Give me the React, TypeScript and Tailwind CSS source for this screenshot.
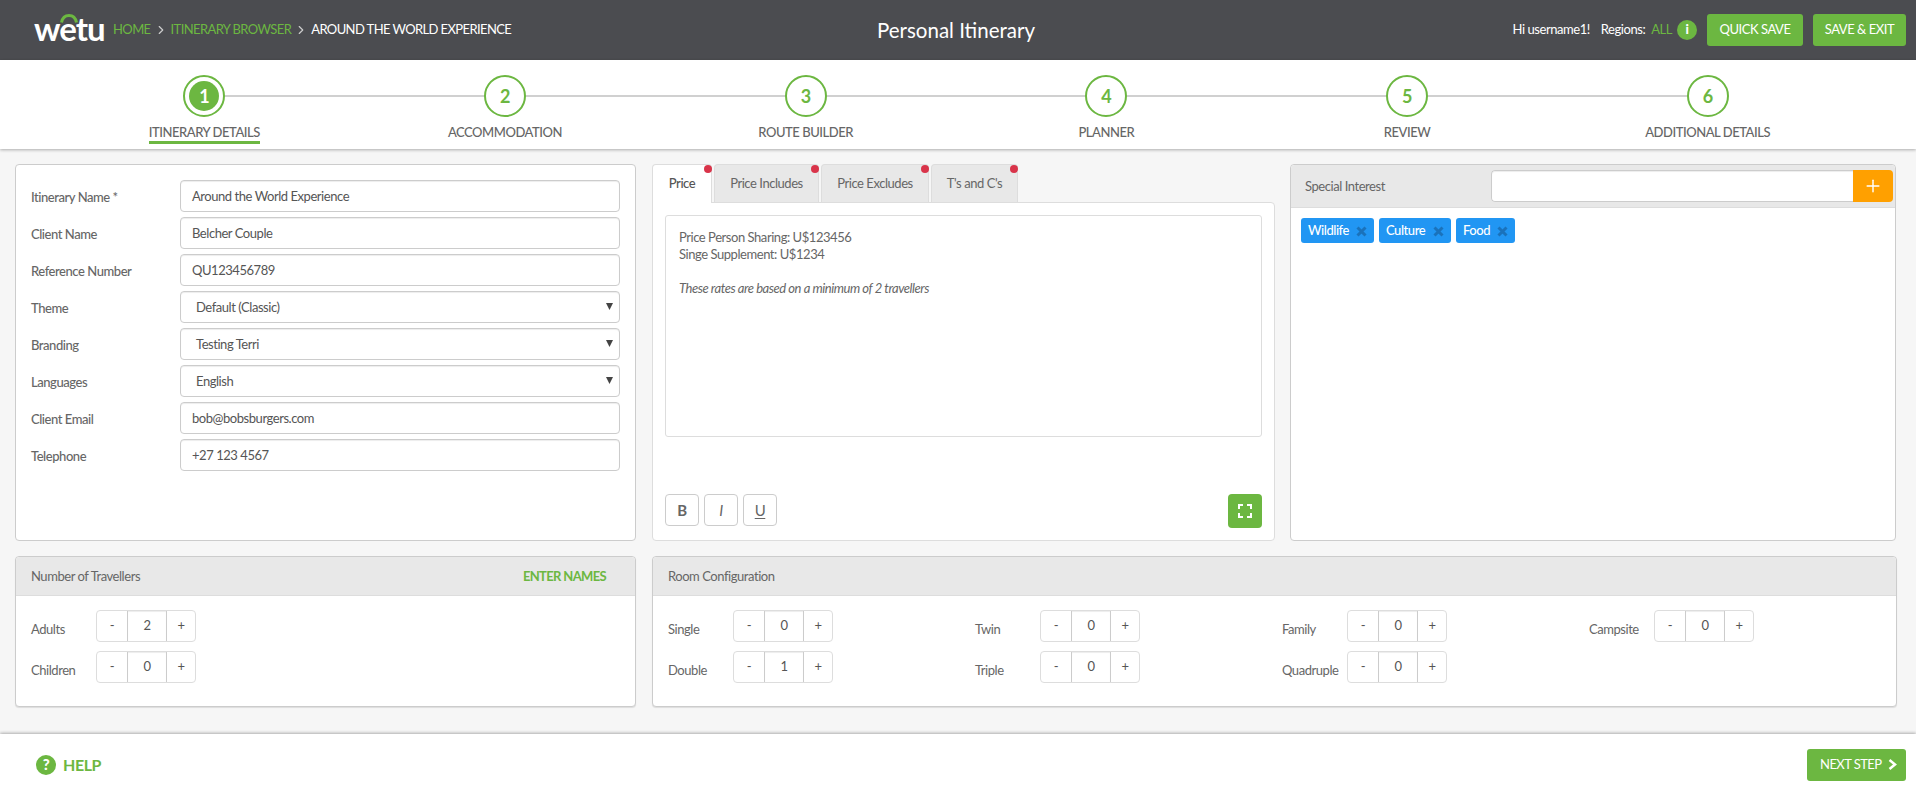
import React from "react";
import { ChevronRight, Plus } from "lucide-react";

const steps = ["ITINERARY DETAILS", "ACCOMMODATION", "ROUTE BUILDER", "PLANNER", "REVIEW", "ADDITIONAL DETAILS"];

const fields: { label: string; value: string; select?: boolean }[] = [
  { label: "Itinerary Name *", value: "Around the World Experience" },
  { label: "Client Name", value: "Belcher Couple" },
  { label: "Reference Number", value: "QU123456789" },
  { label: "Theme", value: "Default (Classic)", select: true },
  { label: "Branding", value: "Testing Terri", select: true },
  { label: "Languages", value: "English", select: true },
  { label: "Client Email", value: "bob@bobsburgers.com" },
  { label: "Telephone", value: "+27 123 4567" },
];

const tabs = [
  { name: "Price", w: "w-[60px]", active: true },
  { name: "Price Includes", w: "w-[105px]" },
  { name: "Price Excludes", w: "w-[108px]" },
  { name: "T's and C's", w: "w-[87px]" },
];

function Counter({ label, value, labelW }: { label: string; value: string; labelW: string }) {
  return (
    <div className="flex items-start">
      <div className={`${labelW} pt-[10px] text-[13px] leading-[18px] text-[#666]`}>{label}</div>
      <div className="flex h-[32px] w-[100px] rounded-[4px] border border-[#ddd] text-[13px] text-[#555]">
        <div className="flex w-[30px] items-center justify-center">-</div>
        <div className="flex w-[40px] items-center justify-center border-x border-[#ccc] shadow-[inset_0_1px_1px_rgba(0,0,0,0.075)]">{value}</div>
        <div className="flex flex-1 items-center justify-center">+</div>
      </div>
    </div>
  );
}

function Chip({ text, w }: { text: string; w: string }) {
  return (
    <div className={`flex h-[25px] ${w} items-center justify-between rounded-[3px] bg-[#2196f3] pl-[7px] pr-[7px] text-[13px] font-medium text-white`}>
      {text}
      <svg width="11" height="11" viewBox="0 0 11 11" className="mt-[1px]">
        <path d="M1.5 1.5l8 8M9.5 1.5l-8 8" stroke="#1a72bb" strokeWidth="3" />
      </svg>
    </div>
  );
}

function PanelHeader({ children }: { children: React.ReactNode }) {
  return (
    <div className="flex h-[39px] items-center justify-between rounded-t-[4px] border-b border-[#ddd] bg-[#e8e8e8] pl-[15px] pr-[29px] pt-[1px] text-[13px] text-[#666]">
      {children}
    </div>
  );
}

export default function App() {
  return (
    <div className="flex h-[788px] flex-col overflow-hidden bg-white tracking-[-0.45px] [font-family:Lato,sans-serif]">
      {/* Top bar */}
      <header className="flex h-[60px] shrink-0 items-center bg-[#4b4c50] pl-[34px] pr-[10px]">
        <div className="flex flex-1 items-center">
          <div className="relative mr-[13px] h-[40px] w-[66px]">
            <svg width="18" height="9" viewBox="0 0 18 9" className="absolute left-[26px] top-[4px]">
              <path d="M1.5 8.5C2.5 3.5 5 1.5 9 1.5s6.5 2 7.5 7" fill="none" stroke="#6cb741" strokeWidth="3" />
            </svg>
            <span className="absolute left-0 top-[3px] text-[33px] font-bold leading-[30px] tracking-[-1px] text-white">wetu</span>
          </div>
          <nav className="flex items-center text-[13px] tracking-[-0.6px] text-[#6cb741]">
            <span>HOME</span>
            <ChevronRight size={14} strokeWidth={2} className="mx-[3px] text-[#ccc]" />
            <span>ITINERARY BROWSER</span>
            <ChevronRight size={14} strokeWidth={2} className="mx-[3px] text-[#ccc]" />
            <span className="text-white">AROUND THE WORLD EXPERIENCE</span>
          </nav>
        </div>
        <h1 className="mr-[28px] text-[20.5px] font-normal tracking-normal text-white">Personal Itinerary</h1>
        <div className="flex flex-1 items-center justify-end text-[13px] text-white">
          <span className="mr-[11px]">Hi username1!</span>
          <span className="mr-[6px]">Regions:</span>
          <span className="mr-[5px] text-[#6cb741]">ALL</span>
          <span className="mr-[10px] flex h-[20px] w-[20px] items-center justify-center rounded-full bg-[#6cb741] text-[13px] font-black">i</span>
          <button className="mr-[10px] h-[32px] w-[96px] rounded-[3px] bg-[#6cb741] text-[13px] text-white">QUICK SAVE</button>
          <button className="h-[32px] w-[93px] rounded-[3px] bg-[#6cb741] text-[13px] text-white">SAVE &amp; EXIT</button>
        </div>
      </header>

      {/* Stepper */}
      <div className="z-10 grid h-[89px] shrink-0 grid-cols-6 bg-white pl-[54px] pr-[58px] shadow-[0_1px_3px_rgba(0,0,0,0.3)]">
        {steps.map((s, i) => (
          <div key={s} className="relative flex flex-col items-center pt-[15px]">
            {i < 5 && <div className="absolute left-1/2 top-[35px] h-[2px] w-full bg-[#d0d0d0]" />}
            <div className="relative flex h-[42px] w-[42px] items-center justify-center rounded-full border-2 border-[#6cb741] bg-white">
              {i === 0 ? (
                <div className="flex h-[30px] w-[30px] items-center justify-center rounded-full bg-[#6cb741] text-[18px] font-bold text-white">1</div>
              ) : (
                <span className="text-[18px] font-bold text-[#6cb741]">{i + 1}</span>
              )}
            </div>
            <div className={`mt-[7px] pb-[1px] text-[13px] font-medium leading-[16px] text-[#666] ${i === 0 ? "border-b-[3px] border-[#6cb741]" : ""}`}>{s}</div>
          </div>
        ))}
      </div>

      {/* Main */}
      <main className="flex flex-1 flex-col bg-[#f6f6f6] pl-[15px] pr-5 pt-[15px]">
        <div className="flex h-[377px] gap-4">
          {/* Details form */}
          <section className="flex w-[621px] shrink-0 flex-col gap-[5px] rounded-[4px] border border-[#ccc] bg-white pl-[15px] pr-[15px] pt-[15px]">
            {fields.map((f) => (
              <div key={f.label} className="flex h-[32px] items-center">
                <div className="w-[149px] pt-[4px] text-[13px] font-medium text-[#666]">{f.label}</div>
                <div className={`flex h-[32px] flex-1 items-center justify-between rounded-[4px] border border-[#ccc] pt-[1px] shadow-[inset_0_1px_1px_rgba(0,0,0,0.075)] text-[13px] text-[#555] ${f.select ? "pl-[15px] pr-[6px]" : "pl-[11px]"}`}>
                  <span>{f.value}</span>
                  {f.select && (
                    <svg width="7" height="7" viewBox="0 0 7 7" className="mb-[3px]">
                      <path d="M0 0h7L3.5 7z" fill="#444" />
                    </svg>
                  )}
                </div>
              </div>
            ))}
          </section>

          {/* Tabs */}
          <section className="flex w-[623px] shrink-0 flex-col">
            <div className="relative z-10 flex h-[39px] gap-[2px]">
              {tabs.map((t) => (
                <div
                  key={t.name}
                  className={`relative flex ${t.w} items-center justify-center rounded-t-[4px] border border-b-0 text-[13px] ${
                    t.active ? "border-[#ddd] bg-white font-medium text-[#555]" : "h-[38px] border-[#ddd] bg-[#e8e8e8] text-[#666]"
                  }`}
                >
                  {t.name}
                  <span className="absolute right-[-1px] top-0 h-[8px] w-[8px] rounded-full bg-[#d9344a]" />
                </div>
              ))}
            </div>
            <div className="-mt-px flex flex-1 flex-col justify-between rounded-b-[4px] rounded-tr-[4px] border border-[#ddd] bg-white px-[12px] pb-[12px] pt-[12px]">
              <div className="h-[222px] rounded-[3px] border border-[#ddd] px-[13px] pt-[13px] text-[13px] leading-[17px] text-[#666]">
                <div>Price Person Sharing: U$123456</div>
                <div>Singe Supplement: U$1234</div>
                <div className="mt-[17px] italic">These rates are based on a minimum of 2 travellers</div>
              </div>
              <div className="flex items-start justify-between">
                <div className="flex gap-[5px]">
                  <button className="h-[32px] w-[34px] rounded-[4px] border border-[#ccc] text-[15px] font-bold text-[#666]">B</button>
                  <button className="h-[32px] w-[34px] rounded-[4px] border border-[#ccc] text-[15px] italic text-[#666]">I</button>
                  <button className="h-[32px] w-[34px] rounded-[4px] border border-[#ccc] text-[15px] text-[#666] underline underline-offset-2">U</button>
                </div>
                <button className="flex h-[34px] w-[34px] items-center justify-center rounded-[4px] bg-[#6cb741]">
                  <svg width="14" height="14" viewBox="0 0 14 14" fill="none" stroke="#fff" strokeWidth="2">
                    <path d="M1 5V1h4M9 1h4v4M13 9v4H9M5 13H1V9" />
                  </svg>
                </button>
              </div>
            </div>
          </section>

          {/* Special interest */}
          <section className="-ml-px flex flex-1 flex-col rounded-[4px] border border-[#ccc] bg-white">
            <div className="flex h-[43px] shrink-0 items-center justify-between rounded-t-[4px] border-b border-[#ddd] bg-[#e8e8e8] pl-[14px] pr-[2px] text-[13px] text-[#666]">
              <span className="mt-[2px]">Special Interest</span>
              <div className="flex h-[32px] w-[402px] overflow-hidden rounded-[4px]">
                <div className="flex-1 rounded-l-[4px] border border-r-0 border-[#ccc] bg-white shadow-[inset_0_1px_1px_rgba(0,0,0,0.075)]" />
                <div className="flex w-[40px] items-center justify-center bg-[#ffa000]">
                  <Plus size={20} strokeWidth={1.75} className="text-white" />
                </div>
              </div>
            </div>
            <div className="flex gap-[5px] pl-[10px] pt-[10px]">
              <Chip text="Wildlife" w="w-[73px]" />
              <Chip text="Culture" w="w-[72px]" />
              <Chip text="Food" w="w-[59px]" />
            </div>
          </section>
        </div>

        <div className="mt-[15px] flex h-[151px] gap-4">
          {/* Travellers */}
          <section className="flex w-[621px] shrink-0 flex-col rounded-[4px] border border-[#ccc] bg-white shadow-[0_1px_1px_rgba(0,0,0,0.1)]">
            <PanelHeader>
              <span>Number of Travellers</span>
              <span className="font-bold tracking-[-0.65px] text-[#6cb741]">ENTER NAMES</span>
            </PanelHeader>
            <div className="flex flex-col gap-[9px] pl-[15px] pt-[14px]">
              <Counter label="Adults" value="2" labelW="w-[65px]" />
              <Counter label="Children" value="0" labelW="w-[65px]" />
            </div>
          </section>

          {/* Rooms */}
          <section className="flex flex-1 flex-col rounded-[4px] border border-[#ccc] bg-white shadow-[0_1px_1px_rgba(0,0,0,0.1)]">
            <PanelHeader>
              <span>Room Configuration</span>
            </PanelHeader>
            <div className="grid w-[1243px] grid-cols-4 gap-y-[9px] pl-[15px] pt-[14px]">
              <Counter label="Single" value="0" labelW="w-[65px]" />
              <Counter label="Twin" value="0" labelW="w-[65px]" />
              <Counter label="Family" value="0" labelW="w-[65px]" />
              <Counter label="Campsite" value="0" labelW="w-[65px]" />
              <Counter label="Double" value="1" labelW="w-[65px]" />
              <Counter label="Triple" value="0" labelW="w-[65px]" />
              <Counter label="Quadruple" value="0" labelW="w-[65px]" />
            </div>
          </section>
        </div>
      </main>

      {/* Footer */}
      <footer className="z-10 flex h-[54px] shrink-0 items-center justify-between bg-white pl-[36px] pr-[10px] pt-[7px] shadow-[0_-1px_3px_rgba(0,0,0,0.3)]">
        <div className="flex items-center gap-[7px] text-[16px] font-bold text-[#6cb741]">
          <span className="flex h-[20px] w-[20px] items-center justify-center rounded-full bg-[#6cb741] text-[15px] font-black text-white">?</span>
          HELP
        </div>
        <button className="flex h-[32px] w-[99px] items-center gap-[6px] rounded-[3px] bg-[#6cb741] pl-[13px] text-[13px] tracking-[-0.55px] text-white">
          NEXT STEP
          <svg width="9" height="11" viewBox="0 0 9 11" fill="none" stroke="#fff" strokeWidth="2.5">
            <path d="M1.5 1L7 5.5 1.5 10" />
          </svg>
        </button>
      </footer>
    </div>
  );
}
